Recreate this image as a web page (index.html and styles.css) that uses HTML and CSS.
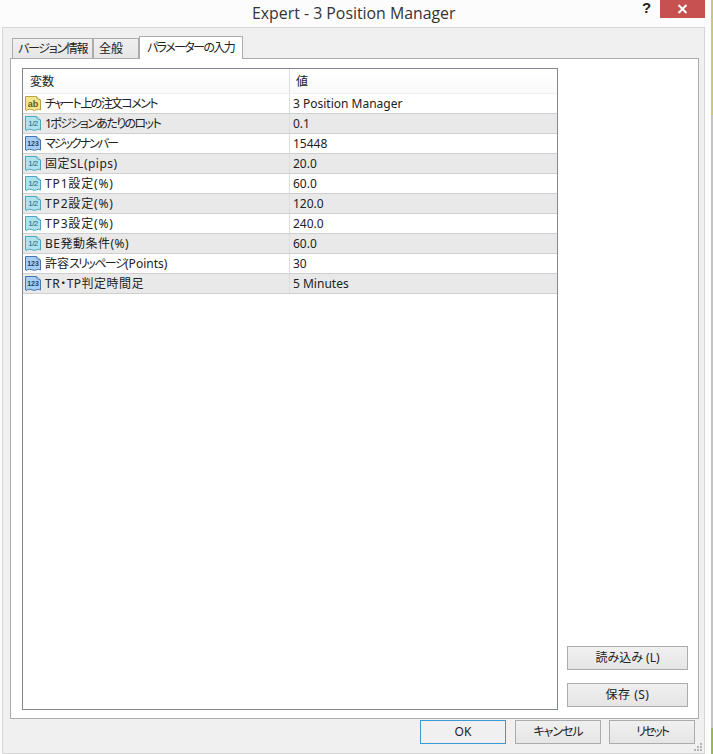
FILE: index.html
```html
<!DOCTYPE html>
<html lang="ja">
<head>
<meta charset="utf-8">
<title>Expert - 3 Position Manager</title>
<link rel="stylesheet" href="styles.css">
</head>
<body>
<svg class="defs" width="0" height="0" aria-hidden="true">
  <defs>
    <symbol id="doc" viewBox="0 0 16 16">
      <path d="M.5 1.500H11.500L15.500 5V15Q13.500 13.500 11.500 14.800T7 14.800T2.500 14.800T.5 15Z" fill="currentColor" stroke="var(--edge)"/>
      <path d="M11 1.500Q11.500 4.500 15.500 5" fill="#fff" stroke="var(--edge)"/>
    </symbol>
  </defs>
</svg>
<div class="window">
  <header class="titlebar">
    <span class="title">Expert - 3 Position Manager</span>
    <span class="help">?</span>
    <span class="close"><svg width="11" height="10" viewBox="0 0 11 10"><path d="M1.500 1L9.500 9M9.500 1L1.500 9" stroke="#fff" stroke-width="2" fill="none"/></svg></span>
  </header>
  <main class="client">
    <div class="tabs">
      <div class="tab tight-1b">バージョン情報</div>
      <div class="tab">全般</div>
      <div class="tab active tight-2">パラメーターの入力</div>
    </div>
    <section class="pane">
      <div class="list">
        <div class="row head"><div class="name">変数</div><div class="value">値</div></div>
        <div class="row"><div class="name"><svg class="ic ab"><use href="#doc"/></svg><span class="ictext big">ab</span><span class="tight-2">チャート上の注文コメント</span></div><div class="value">3 Position Manager</div></div>
        <div class="row alt"><div class="name"><svg class="ic dbl"><use href="#doc"/></svg><span class="ictext frac">1/2</span><span class="tight-2">1ポジションあたりのロット</span></div><div class="value">0.1</div></div>
        <div class="row"><div class="name"><svg class="ic int"><use href="#doc"/></svg><span class="ictext">123</span><span class="tight-3">マジックナンバー</span></div><div class="value">15448</div></div>
        <div class="row alt"><div class="name"><svg class="ic dbl"><use href="#doc"/></svg><span class="ictext frac">1/2</span><span class="loose">固定SL(pips)</span></div><div class="value">20.0</div></div>
        <div class="row"><div class="name"><svg class="ic dbl"><use href="#doc"/></svg><span class="ictext frac">1/2</span><span class="loose-2">TP1設定(%)</span></div><div class="value">60.0</div></div>
        <div class="row alt"><div class="name"><svg class="ic dbl"><use href="#doc"/></svg><span class="ictext frac">1/2</span><span class="loose-2">TP2設定(%)</span></div><div class="value">120.0</div></div>
        <div class="row"><div class="name"><svg class="ic dbl"><use href="#doc"/></svg><span class="ictext frac">1/2</span><span class="loose-2">TP3設定(%)</span></div><div class="value">240.0</div></div>
        <div class="row alt"><div class="name"><svg class="ic dbl"><use href="#doc"/></svg><span class="ictext frac">1/2</span><span class="loose">BE発動条件(%)</span></div><div class="value">60.0</div></div>
        <div class="row"><div class="name"><svg class="ic int"><use href="#doc"/></svg><span class="ictext">123</span>許容<span class="tight-2">スリッページ</span>(Points)</div><div class="value">30</div></div>
        <div class="row alt"><div class="name"><svg class="ic int"><use href="#doc"/></svg><span class="ictext">123</span><span class="loose">TR・TP判定時間足</span></div><div class="value">5 Minutes</div></div>
      </div>
      <div class="side">
        <button class="btn">読み込み (L)</button>
        <button class="btn loose">保存 (S)</button>
      </div>
    </section>
    <footer class="actions">
      <button class="btn default">OK</button>
      <button class="btn tight-1">キャンセル</button>
      <button class="btn tight-3">リセット</button>
    </footer>
    <svg class="grip" width="8" height="8" viewBox="0 0 8 8"><path d="M6 0h2v2H6zM3 3h2v2H3zM6 3h2v2H6zM0 6h2v2H0zM3 6h2v2H3zM6 6h2v2H6z" fill="#b4b4b4"/></svg>
  </main>
</div>
</body>
</html>
```
FILE: styles.css
```css
* { box-sizing: border-box; }
html, body { margin: 0; height: 100%; }
body {
  width: 713px;
  height: 754px;
  overflow: hidden;
  background: linear-gradient(#c9c77c 0 115px, #c4c4c4 115px 728px, #9ab84a 728px);
  font-family: "Noto Sans", "Noto Sans CJK JP", sans-serif;
  font-size: 12px;
  font-feature-settings: "palt";
  color: #222;
}
.tight-1 { letter-spacing: -1px; }
.tight-1b { letter-spacing: -1.3px; }
.tight-2 { letter-spacing: -1.6px; }
.tight-3 { letter-spacing: -2px; }
.loose { letter-spacing: 0.5px; }
.loose-2 { letter-spacing: 0.85px; }
.defs { position: absolute; }
.window {
  width: 711px;
  height: 754px;
  background: #fcfcfc;
  display: flex;
  flex-direction: column;
}
.titlebar {
  height: 27px;
  flex: none;
  display: flex;
  align-items: flex-start;
  padding-left: 252px;
}
.title {
  width: 203px;
  font-family: "Open Sans", sans-serif;
  font-size: 15.85px;
  line-height: 27px;
  white-space: nowrap;
  color: #333;
}
.help {
  margin-left: 187px;
  width: 18px;
  font: bold 15px/16px "Liberation Sans", sans-serif;
  color: #222;
}
.close {
  width: 45px;
  height: 18px;
  background: #c75050;
  display: flex;
  align-items: center;
  justify-content: center;
}
.client {
  position: relative;
  flex: 1;
  margin: 0 6px 0 2px;
  background: #f0f0f0;
  border: 1px solid #d6d6d6;
  padding: 8px 5px 0 7px;
  display: flex;
  flex-direction: column;
}
.tabs {
  display: flex;
  align-items: flex-start;
  height: 22px;
  padding-left: 2px;
  position: relative;
  z-index: 1;
}
.tab {
  height: 20px;
  margin-top: 2px;
  padding: 0 5px;
  line-height: 20px;
  background: linear-gradient(#f0f0f0, #e6e6e6);
  border: 1px solid #acacac;
  border-bottom: 0;
  white-space: nowrap;
}
.tab:nth-child(1) { width: 81px; }
.tab:nth-child(2) { width: 46px; }
.tab.active {
  width: 104px;
  height: 23px;
  margin-top: 0;
  padding: 0 7px;
  line-height: 22px;
  background: #fff;
}
.pane {
  height: 661px;
  flex: none;
  background: #fff;
  border: 1px solid #acacac;
  padding: 9px 10px 8px 11px;
  display: flex;
  align-items: stretch;
  gap: 9px;
}
.list {
  width: 536px;
  flex: none;
  border: 1px solid #828790;
  background: #fff;
}
.row {
  display: flex;
  height: 20px;
  border-bottom: 1px solid #cfcfcf;
  line-height: 20px;
  white-space: nowrap;
}
.row.alt { background: #e9e9e9; }
.row.head {
  height: 25px;
  border-bottom: 1px solid #f0f0f0;
  line-height: 26px;
  background: linear-gradient(#fff, #fafafa);
}
.name {
  position: relative;
  width: 267px;
  flex: none;
  padding-left: 22px;
  border-right: 1px solid #dedede;
}
.head .name { padding-left: 7px; }
.value { padding-left: 3px; flex: 1; }
.head .value { padding-left: 6px; }
.ic {
  position: absolute;
  left: 2px;
  top: 1px;
  width: 16px;
  height: 16px;
}
.ab { color: #f5e58f; --edge: #b9a24a; }
.dbl { color: #aee3ee; --edge: #4fa5bb; }
.int { color: #a9cdf2; --edge: #4577ad; }
.ictext {
  position: absolute;
  left: 2px;
  top: 5px;
  width: 16px;
  text-align: center;
  font: bold 7px/10px "Liberation Sans", sans-serif;
  letter-spacing: 0;
  color: #1f4468;
}
.ictext.big {
  font: bold 9px/10px "Liberation Sans", sans-serif;
  color: #6b5a1a;
  top: 5px;
}
.ictext.frac {
  font: 8px/10px "Liberation Sans", sans-serif;
  letter-spacing: -0.5px;
  color: #1f6478;
}
.side {
  flex: 1;
  display: flex;
  flex-direction: column;
  justify-content: flex-end;
  gap: 13px;
  padding-bottom: 3px;
}
.btn {
  height: 24px;
  width: 121px;
  border: 1px solid #acacac;
  background: linear-gradient(#f0f0f0, #e5e5e5);
  font-family: inherit;
  font-size: inherit;
  font-feature-settings: "palt";
  color: #222;
  padding: 0 0 2px;
}
.actions {
  display: flex;
  gap: 9px;
  justify-content: flex-end;
  padding: 1px 4px 0 0;
}
.actions .btn { width: 86px; }
.actions .btn:last-child { margin-left: -1px; }
.btn.default { border-color: #3c98d8; background: #f0f0f0; }
.grip {
  position: absolute;
  right: 2px;
  bottom: 2px;
}
```
